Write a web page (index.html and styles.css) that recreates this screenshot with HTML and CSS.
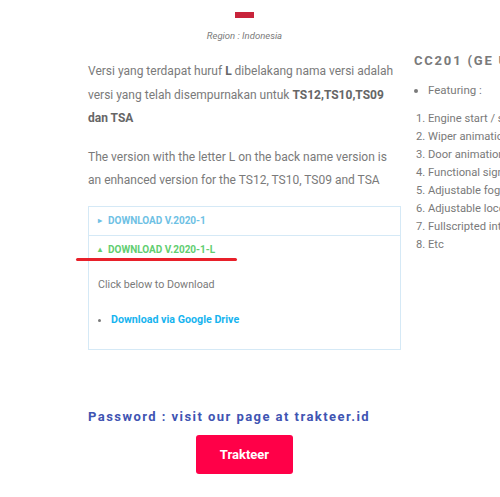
FILE: index.html
```html
<!DOCTYPE html>
<html lang="en">

<head>
    <meta charset="UTF-8">
    <meta name="viewport" content="width=device-width, initial-scale=1.0">
    <title>CC201 Download</title>
    <link rel="stylesheet" href="styles.css">
</head>

<body>
    <div class="page">
        <div class="main_col">
            <div class="flag_bar"></div>
            <p class="region">Region : Indonesia</p>

            <p class="desc">Versi yang terdapat huruf <b>L</b> dibelakang nama versi adalah versi yang telah disempurnakan untuk <b>TS12,TS10,TS09 dan TSA</b></p>
            <p class="desc">The version with the letter L on the back name version is an enhanced version for the TS12, TS10, TS09 and TSA</p>

            <div class="accordion">
                <div class="acc_item">
                    <div class="acc_title"><span class="acc_icon">&#9656;</span>DOWNLOAD V.2020-1</div>
                </div>
                <div class="acc_item active">
                    <div class="acc_title"><span class="acc_icon">&#9652;</span>DOWNLOAD V.2020-1-L</div>
                    <div class="acc_content">
                        <p>Click below to Download</p>
                        <ul>
                            <li><a href="#">Download via Google Drive</a></li>
                        </ul>
                    </div>
                </div>
                <!-- 红色标记线 -->
                <span class="mark_line"></span>
            </div>

            <h3 class="password">Password : visit our page at trakteer.id</h3>
            <div class="btn_wrap">
                <a class="btn" href="#">Trakteer</a>
            </div>
        </div>

        <div class="side_col">
            <h2 class="side_title">CC201 (GE U20C)</h2>
            <ul class="feat">
                <li>Featuring :</li>
            </ul>
            <p class="feat_list">
                1. Engine start / stop<br>
                2. Wiper animation<br>
                3. Door animation<br>
                4. Functional signal light<br>
                5. Adjustable fog lamp<br>
                6. Adjustable loco number<br>
                7. Fullscripted interior<br>
                8. Etc
            </p>
        </div>
    </div>
</body>

</html>
```

FILE: styles.css
```css
* {
    margin: 0;
    padding: 0;
    box-sizing: border-box;
}

html,
body {
    background-color: #fff;
    overflow: hidden;
}

body {
    font-family: Roboto, "Liberation Sans", sans-serif;
    color: #7a7a7a;
}

.page {
    display: flex;
    align-items: flex-start;
    padding-left: 88px;
    width: 800px;
}

.main_col {
    position: relative;
    width: 313px;
    flex-shrink: 0;
}

.flag_bar {
    margin: 12px auto 0;
    width: 19px;
    height: 6px;
    background-color: #c8233b;
}

.region {
    margin-top: 11px;
    font-size: 9.5px;
    font-style: italic;
    line-height: 14px;
    text-align: center;
    color: #7a7a7a;
}

.desc {
    margin-top: 17px;
    font-size: 12px;
    line-height: 23.5px;
}

.desc + .desc {
    margin-top: 15px;
}

.desc b {
    color: #666;
}

.accordion {
    position: relative;
    margin-top: 13px;
    border: 1px solid #d5e9f6;
}

.acc_item + .acc_item {
    border-top: 1px solid #d5e9f6;
}

.acc_title {
    display: flex;
    align-items: center;
    height: 28px;
    padding-left: 9px;
    font-size: 10px;
    font-weight: 700;
    color: #6ec1e4;
}

.active .acc_title {
    height: 27px;
    color: #61ce70;
}

.acc_icon {
    width: 10px;
    font-size: 8px;
}

.acc_content {
    padding: 15px 9px 22px;
    font-size: 10.7px;
}

.acc_content p {
    line-height: 14px;
}

.acc_content ul {
    margin-top: 21px;
    padding-left: 13px;
    line-height: 14px;
}

.acc_content a {
    font-weight: 700;
    color: #17b4ef;
    text-decoration: none;
}

.mark_line {
    position: absolute;
    left: -13px;
    top: 51px;
    width: 161px;
    height: 3px;
    border-radius: 2px;
    background-color: #e8202a;
}

.password {
    margin-top: 58px;
    font-size: 13px;
    font-weight: 700;
    line-height: 18px;
    letter-spacing: 1.45px;
    color: #4054b2;
}

.btn_wrap {
    margin-top: 9px;
    text-align: center;
}

.btn {
    display: inline-block;
    width: 97px;
    height: 39px;
    line-height: 39px;
    border-radius: 3px;
    background-color: #ff0048;
    color: #fff;
    font-size: 13px;
    font-weight: 700;
    text-decoration: none;
}

.side_col {
    margin-left: 13px;
    padding-top: 53px;
    white-space: nowrap;
}

.side_title {
    font-size: 13px;
    font-weight: 700;
    line-height: 16px;
    letter-spacing: 1.8px;
    color: #7a7a7a;
}

.feat {
    margin-top: 13px;
    padding-left: 14px;
    font-size: 11.5px;
    line-height: 16px;
}

.feat_list {
    margin-top: 12px;
    margin-left: 2px;
    font-size: 11.2px;
    line-height: 18px;
}
```
